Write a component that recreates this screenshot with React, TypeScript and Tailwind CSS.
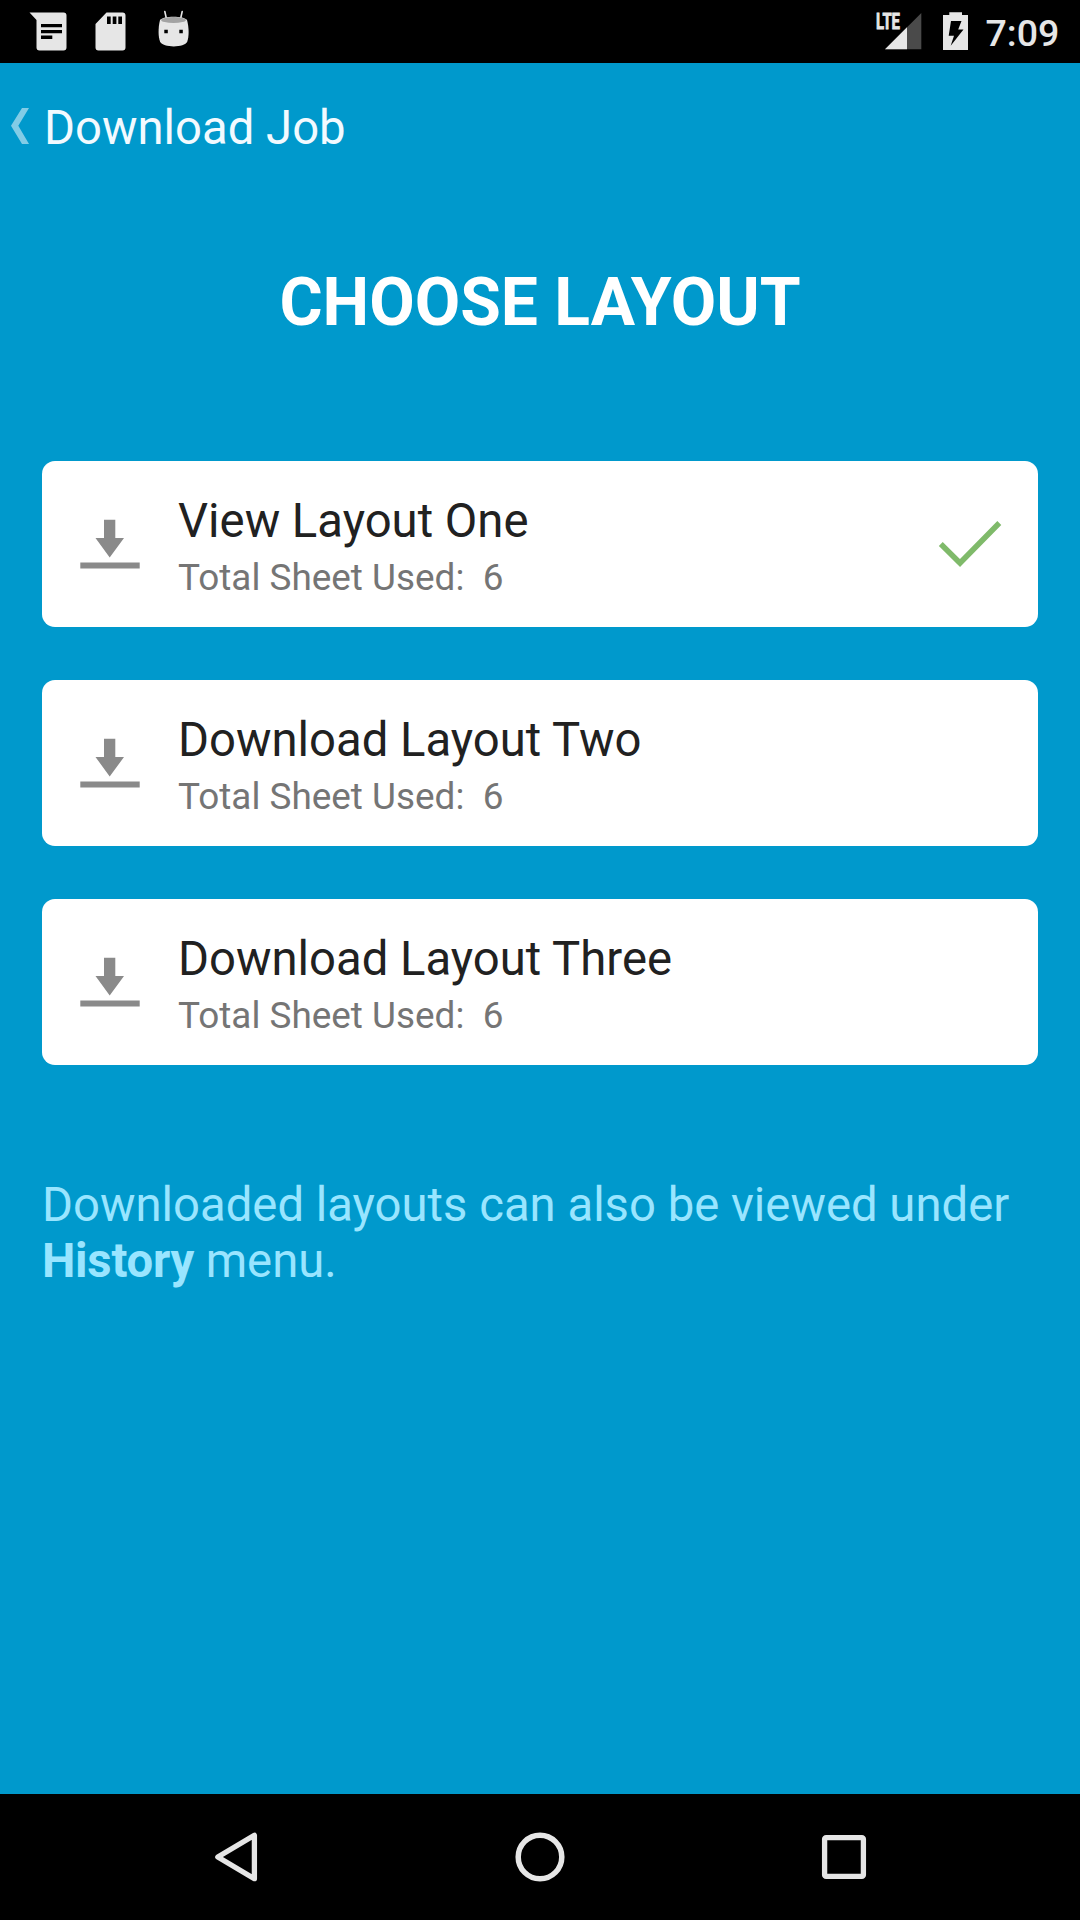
import React from "react";

type Layout = {
  id: string;
  title: string;
  sheets: number;
  isSelected: boolean;
};

const layouts: Layout[] = [
  {id: "one", title: "View Layout One", sheets: 6, isSelected: true},
  {id: "two", title: "Download Layout Two", sheets: 6, isSelected: false},
  {id: "three", title: "Download Layout Three", sheets: 6, isSelected: false},
];

const StatusBar: React.FC = () => (
  <div className="flex h-[63px] shrink-0 items-start justify-between bg-black text-[#e6e6e6]">
    <svg width="200" height="63" viewBox="0 0 200 63" fill="currentColor">
      {/* message */}
      <path d="M29.5 12.5H63.5a3 3 0 0 1 3 3V47.5a3 3 0 0 1-3 3H39.5a3 3 0 0 1-3-3V20Z" />
      <path d="M41 24h21v3.3H41zM41 30h21v3.3H41zM41 35.4h11.3v3.6H41z" fill="#000" />
      {/* sd card */}
      <path d="M106.5 12.5H122.5a3 3 0 0 1 3 3V47.5a3 3 0 0 1-3 3H98.5a3 3 0 0 1-3-3V24Z" />
      <path d="M107 16.5h3.7V24H107zM112.7 16.5h3.7V24h-3.7zM118.3 16.5h3.7V24h-3.7z" fill="#000" />
      {/* debug head */}
      <path d="M164.8 11.5l1.7 7.5M182.2 11.5l-1.7 7.5" stroke="currentColor" strokeWidth="1.6" strokeLinecap="round" />
      <path d="M160 20C158 28 158.2 37 160 41.5C163 48 184.5 48 187.3 41.5C189 37 189.2 28 187 20C184 15.5 163 15.5 160 20Z" />
      <ellipse cx="173.5" cy="20" rx="12.5" ry="3" fill="#a3a3a3" />
      <path d="M164.3 29.8h3.5v3.5h-3.5zM179.3 29.8h3.5v3.5h-3.5z" fill="#000" />
    </svg>
    <div className="flex">
      <svg width="110" height="63" viewBox="870 0 110 63" fill="currentColor">
        <text
          x="876"
          y="29"
          fontSize="21.5"
          fontWeight="700"
          textLength="24"
          lengthAdjust="spacingAndGlyphs"
          stroke="currentColor"
          strokeWidth="0.8"
          className="font-[Roboto,sans-serif]"
        >
          LTE
        </text>
        <path d="M885 49.3L921.3 13V49.3Z" fill="#4a4a4a" />
        <path d="M885 49.3L907 27.3V49.3Z" />
        <path d="M943 15h6.3v-2.7h12.7V15h6v35h-25z" />
        <path d="M951 21h10.5l-3.3 8.5h5.3L950.7 45.7l3.3-10h-5.3z" fill="#000" />
      </svg>
      <span className="w-[100px] pt-[11px] pl-[5.5px] text-[37.5px] leading-[44px] font-medium">
        7:09
      </span>
    </div>
  </div>
);

const DownloadIcon: React.FC = () => (
  <svg width="60" height="50" viewBox="0 0 60 50" fill="#8a8a8a" className="shrink-0">
    <path d="M24 .7h11.3v18.3h8.7L29.7 38.5 15.5 19H24z" />
    <path d="M.3 43.5h59.4v6H.3z" />
  </svg>
);

const CheckIcon: React.FC = () => (
  <svg width="64" height="50" viewBox="938 519 64 50" fill="none" className="shrink-0">
    <path d="M940.8 544L960 563 999.3 523" stroke="#7fba6a" strokeWidth="5.5" />
  </svg>
);

const LayoutCard: React.FC<{layout: Layout}> = ({layout}) => (
  <li className="flex h-[166px] items-center rounded-[13px] bg-white pr-9 pl-[38px]">
    <DownloadIcon />
    <div className="ml-[38px] flex-1 pt-[5px]">
      <h2 className="text-[47.25px] leading-[56px] text-[#212121]">{layout.title}</h2>
      <p className="mt-[7px] text-[36.9px] leading-[44px] whitespace-pre text-[#757575]">
        {`Total Sheet Used:  ${layout.sheets}`}
      </p>
    </div>
    {layout.isSelected && <CheckIcon />}
  </li>
);

const NavigationBar: React.FC = () => (
  <nav className="flex h-[126px] shrink-0 items-center justify-between bg-black px-[211px]">
    <svg width="50" height="56" viewBox="0 0 50 56" fill="none" stroke="#e6e6e6" strokeWidth="5.3" strokeLinejoin="round">
      <path d="M43.4 6.3V49.7L6.8 28Z" />
    </svg>
    <svg width="56" height="56" viewBox="0 0 56 56" fill="none" stroke="#e6e6e6" strokeWidth="5.5">
      <circle cx="28" cy="28" r="21.8" />
    </svg>
    <svg width="50" height="56" viewBox="0 0 50 56" fill="none" stroke="#e6e6e6" strokeWidth="5.3">
      <rect x="5.6" y="8.6" width="38.8" height="38.8" rx="1.5" />
    </svg>
  </nav>
);

export default function App() {
  return (
    <div className="flex h-[1920px] w-[1080px] flex-col overflow-hidden bg-[#0099cc] font-[Roboto,sans-serif]">
      <StatusBar />
      <header className="flex items-start pt-[37px] pl-[11px]">
        <svg width="18" height="36" viewBox="0 0 18 36" fill="#82cce6" className="mt-2">
          <path d="M11 0h7L7.3 17.7 18 36H11L0 17.7Z" />
        </svg>
        <span className="ml-[15px] text-[47.25px] leading-[56px] text-[#f2faff]">Download Job</span>
      </header>
      <main className="flex flex-1 flex-col px-[42px]">
        <h1 className="mt-[108px] text-center text-[66px] leading-[78px] font-bold text-white">
          CHOOSE LAYOUT
        </h1>
        <ul className="mt-[119px] flex flex-col gap-[53px]">
          {layouts.map((layout) => (
            <LayoutCard key={layout.id} layout={layout} />
          ))}
        </ul>
        <p className="mt-[113px] text-[47.25px] leading-[55.5px] text-[#99e5ff]">
          Downloaded layouts can also be viewed under{" "}
          <b className="tracking-[-0.25px]">History</b> menu.
        </p>
      </main>
      <NavigationBar />
    </div>
  );
}
